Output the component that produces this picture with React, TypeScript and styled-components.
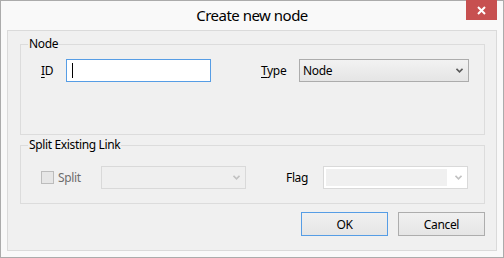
import styled, { createGlobalStyle } from 'styled-components';

const GlobalStyle = createGlobalStyle`
	html, body {
		margin: 0;
		background: #f9f9f9;
	}
	* {
		box-sizing: border-box;
	}
`;

const Window = styled.div`
	width: 504px;
	height: 258px;
	display: flex;
	flex-direction: column;
	padding: 0 6px 6px 6px;
	border: 1px solid #ababab;
	background: #f9f9f9;
	font-family: 'Noto Sans', 'Open Sans', sans-serif;
	font-size: 12px;
	letter-spacing: -0.35px;
	color: #000;
`;

const TitleBar = styled.div`
	height: 29px;
	display: grid;
	grid-template-columns: 1fr auto 1fr;
	align-items: center;
`;

const Title = styled.div`
	grid-column: 2;
	font-size: 15px;
	letter-spacing: -0.5px;
	line-height: 29px;
	color: #000;
`;

const CloseButton = styled.div`
	grid-column: 3;
	justify-self: end;
	align-self: start;
	width: 31px;
	height: 20px;
	margin-top: -1px;
	display: flex;
	align-items: center;
	justify-content: center;
	background: #c75050;
`;

const Client = styled.div`
	flex: 1;
	display: flex;
	flex-direction: column;
	padding: 0 11px 0 12px;
	border: 1px solid #dadada;
	background: #f0f0f0;
`;

const GroupBox = styled.div<{ $top: number; $height: number }>`
	height: ${({ $height }) => $height}px;
	margin-top: ${({ $top }) => $top}px;
	border: 1px solid #dcdcdc;
`;

const Legend = styled.div`
	width: fit-content;
	margin: -9px 0 0 7px;
	padding: 0 1px;
	line-height: 16px;
	background: #f0f0f0;
`;

const Row = styled.div<{ $top: number }>`
	display: flex;
	align-items: center;
	height: 23px;
	margin-top: ${({ $top }) => $top}px;
	padding-left: 20px;
`;

const Label = styled.div<{ $width: number; $gap?: number; $disabled?: boolean }>`
	width: ${({ $width }) => $width}px;
	margin-left: ${({ $gap }) => $gap ?? 0}px;
	color: ${({ $disabled }) => ($disabled ? '#6d6d6d' : '#000')};
	white-space: nowrap;
`;

const Accel = styled.span`
	text-decoration: underline;
	text-underline-offset: 2px;
`;

const TextBox = styled.div<{ $width: number }>`
	width: ${({ $width }) => $width}px;
	height: 23px;
	display: flex;
	align-items: center;
	padding-left: 5px;
	border: 1px solid #569de5;
	background: #fff;
`;

const Caret = styled.span`
	width: 1px;
	height: 15px;
	background: #000;
`;

const Combo = styled.div<{ $width: number; $variant: 'normal' | 'disabled' | 'editable' }>`
	width: ${({ $width }) => $width}px;
	height: 23px;
	display: flex;
	align-items: center;
	padding: 0 5px 0 3px;
	border: 1px solid ${({ $variant }) => ($variant === 'normal' ? '#acacac' : '#d9d9d9')};
	background: ${({ $variant }) =>
		$variant === 'normal'
			? 'linear-gradient(#f2f2f2, #e5e5e5)'
			: $variant === 'editable'
				? '#fff'
				: '#efefef'};
`;

const ComboText = styled.div`
	flex: 1;
`;

const ComboEdit = styled.div`
	flex: 1;
	height: 17px;
	margin-left: -1px;
	margin-right: 8px;
	background: #f0f0f0;
`;

const CheckBox = styled.div`
	width: 13px;
	height: 13px;
	margin-right: 4px;
	border: 1px solid #bcbcbc;
	background: #e6e6e6;
`;

const CheckLabel = styled.div`
	display: flex;
	align-items: center;
	width: 60px;
`;

const ButtonRow = styled.div`
	display: flex;
	justify-content: flex-end;
	gap: 10px;
	margin-top: 8px;
`;

const Button = styled.div<{ $default?: boolean }>`
	width: 87px;
	height: 24px;
	display: flex;
	align-items: center;
	justify-content: center;
	border: 1px solid ${({ $default }) => ($default ? '#569de5' : '#adadad')};
	background: linear-gradient(#f0f0f0, #e5e5e5);
`;

function Chevron({ color }: { color: string }) {
	return (
		<svg width="7" height="5" viewBox="0 0 7 5">
			<path d="M0.5 0.8 L3.5 3.8 L6.5 0.8" fill="none" stroke={color} strokeWidth="1.6" />
		</svg>
	);
}

export default function App() {
	return (
		<>
			<GlobalStyle />
			<Window>
				<TitleBar>
					<Title>Create new node</Title>
					<CloseButton>
						<svg width="9" height="9" viewBox="0 0 9 9">
							<path d="M1 1 L8 8 M8 1 L1 8" stroke="#fff" strokeWidth="2" />
						</svg>
					</CloseButton>
				</TitleBar>
				<Client>
					<GroupBox $top={13} $height={91}>
						<Legend>Node</Legend>
						<Row $top={7}>
							<Label $width={25}>
								<Accel>I</Accel>D
							</Label>
							<TextBox $width={145}>
								<Caret />
							</TextBox>
							<Label $width={38} $gap={50}>
								<Accel>T</Accel>ype
							</Label>
							<Combo $width={170} $variant="normal">
								<ComboText>Node</ComboText>
								<Chevron color="#5a5a5a" />
							</Combo>
						</Row>
					</GroupBox>
					<GroupBox $top={10} $height={59}>
						<Legend>Split Existing Link</Legend>
						<Row $top={13}>
							<CheckLabel>
								<CheckBox />
								<Label $width={40} $disabled>
									Split
								</Label>
							</CheckLabel>
							<Combo $width={145} $variant="disabled">
								<ComboText />
								<Chevron color="#c2c2c2" />
							</Combo>
							<Label $width={37} $gap={40}>
								Flag
							</Label>
							<Combo $width={145} $variant="editable">
								<ComboEdit />
								<Chevron color="#c2c2c2" />
							</Combo>
						</Row>
					</GroupBox>
					<ButtonRow>
						<Button $default>OK</Button>
						<Button>Cancel</Button>
					</ButtonRow>
				</Client>
			</Window>
		</>
	);
}
